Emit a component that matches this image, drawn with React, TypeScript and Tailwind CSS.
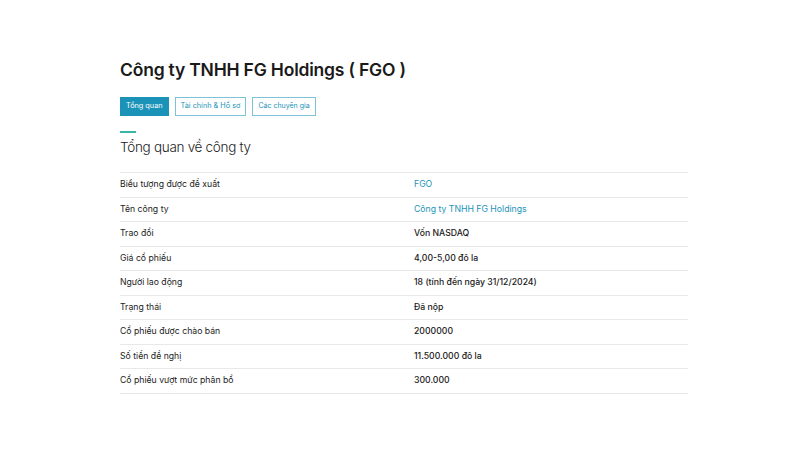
const rows: { label: string; value: string; link?: boolean }[] = [
	{ label: "Biểu tượng được đề xuất", value: "FGO", link: true },
	{ label: "Tên công ty", value: "Công ty TNHH FG Holdings", link: true },
	{ label: "Trao đổi", value: "Vốn NASDAQ" },
	{ label: "Giá cổ phiếu", value: "4,00-5,00 đô la" },
	{ label: "Người lao động", value: "18 (tính đến ngày 31/12/2024)" },
	{ label: "Trạng thái", value: "Đã nộp" },
	{ label: "Cổ phiếu được chào bán", value: "2000000" },
	{ label: "Số tiền đề nghị", value: "11.500.000 đô la" },
	{ label: "Cổ phiếu vượt mức phân bổ", value: "300.000" },
];

export default function App() {
	return (
		<div className="w-[800px] h-[450px] bg-white font-['Inter',sans-serif] text-[#1a1a1a] overflow-hidden">
			<div className="pl-[120px] pr-[112px] pt-[58px]">
				<h1 className="text-[17.5px] leading-[24px] font-semibold tracking-[-0.2px]">
					Công ty TNHH FG Holdings ( FGO )
				</h1>

				<div className="flex gap-[6px] mt-[15px]">
					<button className="h-[19px] px-[5px] bg-[#1b93b8] border border-[#1b93b8] text-white text-[7.3px]">
						Tổng quan
					</button>
					<button className="h-[19px] px-[5px] border border-[#7cc3d6] text-[#1b93b8] text-[7.3px]">
						Tài chính &amp; Hồ sơ
					</button>
					<button className="h-[19px] px-[5px] border border-[#7cc3d6] text-[#1b93b8] text-[7px]">
						Các chuyên gia
					</button>
				</div>

				<div className="mt-[15px] w-[16px] h-[1.5px] bg-[#3bb3a6]" />
				<h2 className="mt-[4.5px] text-[13.5px] leading-[20px] font-light text-[#222] tracking-[-0.3px]">
					Tổng quan về công ty
				</h2>

				<div className="mt-[15px] border-t border-[#e8e8e8]">
					{rows.map((r) => (
						<div
							key={r.label}
							className="flex items-center h-[24.5px] border-b border-[#e8e8e8] text-[8.7px]">
							<div className="w-[294px] text-[#222]">{r.label}</div>
							<div
								className={
									r.link ? "text-[#1b93b8]" : "text-[#1a1a1a] font-medium"
								}>
								{r.value}
							</div>
						</div>
					))}
				</div>
			</div>
		</div>
	);
}
